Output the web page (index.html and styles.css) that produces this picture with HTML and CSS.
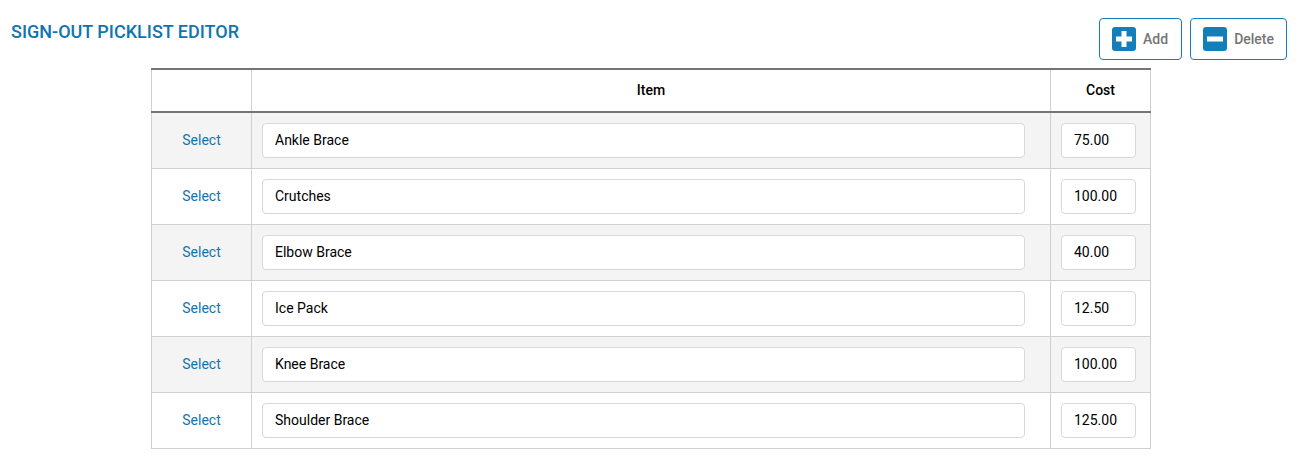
FILE: index.html
```html
<!DOCTYPE html>
<html lang="en">
<head>
<meta charset="utf-8">
<title>Sign-Out Picklist Editor</title>
<link rel="stylesheet" href="styles.css">
</head>
<body>
<header class="topbar">
  <h1 class="title">SIGN-OUT PICKLIST EDITOR</h1>
  <div class="actions">
    <button class="btn btn-add" type="button">
      <svg class="btn-icon" viewBox="0 0 24 24"><rect width="24" height="24" rx="3" fill="#127fba"/><path d="M9.500 4h5v5.500h5.500v5h-5.500v5.500h-5v-5.500h-5.500v-5h5.500z" fill="#fff"/></svg>
      <span>Add</span>
    </button>
    <button class="btn" type="button">
      <svg class="btn-icon" viewBox="0 0 24 24"><rect width="24" height="24" rx="3" fill="#127fba"/><rect x="4" y="9.500" width="16" height="5" fill="#fff"/></svg>
      <span>Delete</span>
    </button>
  </div>
</header>
<table class="grid">
  <thead>
    <tr><th class="col-select"></th><th>Item</th><th class="col-cost">Cost</th></tr>
  </thead>
  <tbody>
    <tr><td class="sel"><a href="#">Select</a></td><td class="item"><input class="field" value="Ankle Brace"></td><td><input class="field" value="75.00"></td></tr>
    <tr><td class="sel"><a href="#">Select</a></td><td class="item"><input class="field" value="Crutches"></td><td><input class="field" value="100.00"></td></tr>
    <tr><td class="sel"><a href="#">Select</a></td><td class="item"><input class="field" value="Elbow Brace"></td><td><input class="field" value="40.00"></td></tr>
    <tr><td class="sel"><a href="#">Select</a></td><td class="item"><input class="field" value="Ice Pack"></td><td><input class="field" value="12.50"></td></tr>
    <tr><td class="sel"><a href="#">Select</a></td><td class="item"><input class="field" value="Knee Brace"></td><td><input class="field" value="100.00"></td></tr>
    <tr><td class="sel"><a href="#">Select</a></td><td class="item"><input class="field" value="Shoulder Brace"></td><td><input class="field" value="125.00"></td></tr>
  </tbody>
</table>
</body>
</html>
```
FILE: styles.css
```css
* { box-sizing: border-box; }
html, body { margin: 0; padding: 0; background: #fff; }
body {
  font-family: Roboto, "Liberation Sans", sans-serif;
  font-size: 14px;
  color: #000;
  height: 457px;
  overflow: hidden;
}
.topbar {
  display: flex;
  justify-content: space-between;
  align-items: flex-start;
  padding: 18px 17px 0 11px;
  height: 68px;
}
.title {
  margin: 4px 0 0;
  font-size: 18px;
  line-height: 20px;
  font-weight: 500;
  color: #0f75ae;
}
.actions { display: flex; gap: 8px; }
.btn {
  display: flex;
  align-items: center;
  gap: 7px;
  height: 42px;
  padding: 0 12px;
  background: #fff;
  border: 1px solid #127fba;
  border-radius: 4px;
  font-family: inherit;
  font-size: 14px;
  font-weight: 500;
  color: #757575;
}
.btn-add { padding-right: 13px; }
.btn-icon { width: 24px; height: 24px; flex: none; }
.grid {
  width: 1000px;
  margin-left: 151px;
  border-collapse: collapse;
  table-layout: fixed;
}
.grid th {
  height: 43px;
  padding: 0 0 1px;
  font-size: 14px;
  font-weight: 500;
  text-align: center;
  border: 1px solid #d0d0d0;
  border-top: 2px solid #757575;
  border-bottom: 2px solid #757575;
}
.col-select { width: 100px; }
.col-cost { width: 100px; }
.grid td {
  height: 56px;
  padding: 0 14px 0 10px;
  border: 1px solid #d0d0d0;
}
.grid td.item { padding-right: 25px; }
.grid tbody tr:nth-child(odd) td { background: #f4f4f4; }
.grid td.sel { padding: 0; text-align: center; }
.sel a { color: #0f75ae; text-decoration: none; font-size: 14px; }
.field {
  display: block;
  width: 100%;
  height: 35px;
  padding: 0 12px;
  background: #fff;
  border: 1px solid #d5d8dc;
  border-radius: 4px;
  font-family: inherit;
  font-size: 14px;
  color: #000;
}
```
